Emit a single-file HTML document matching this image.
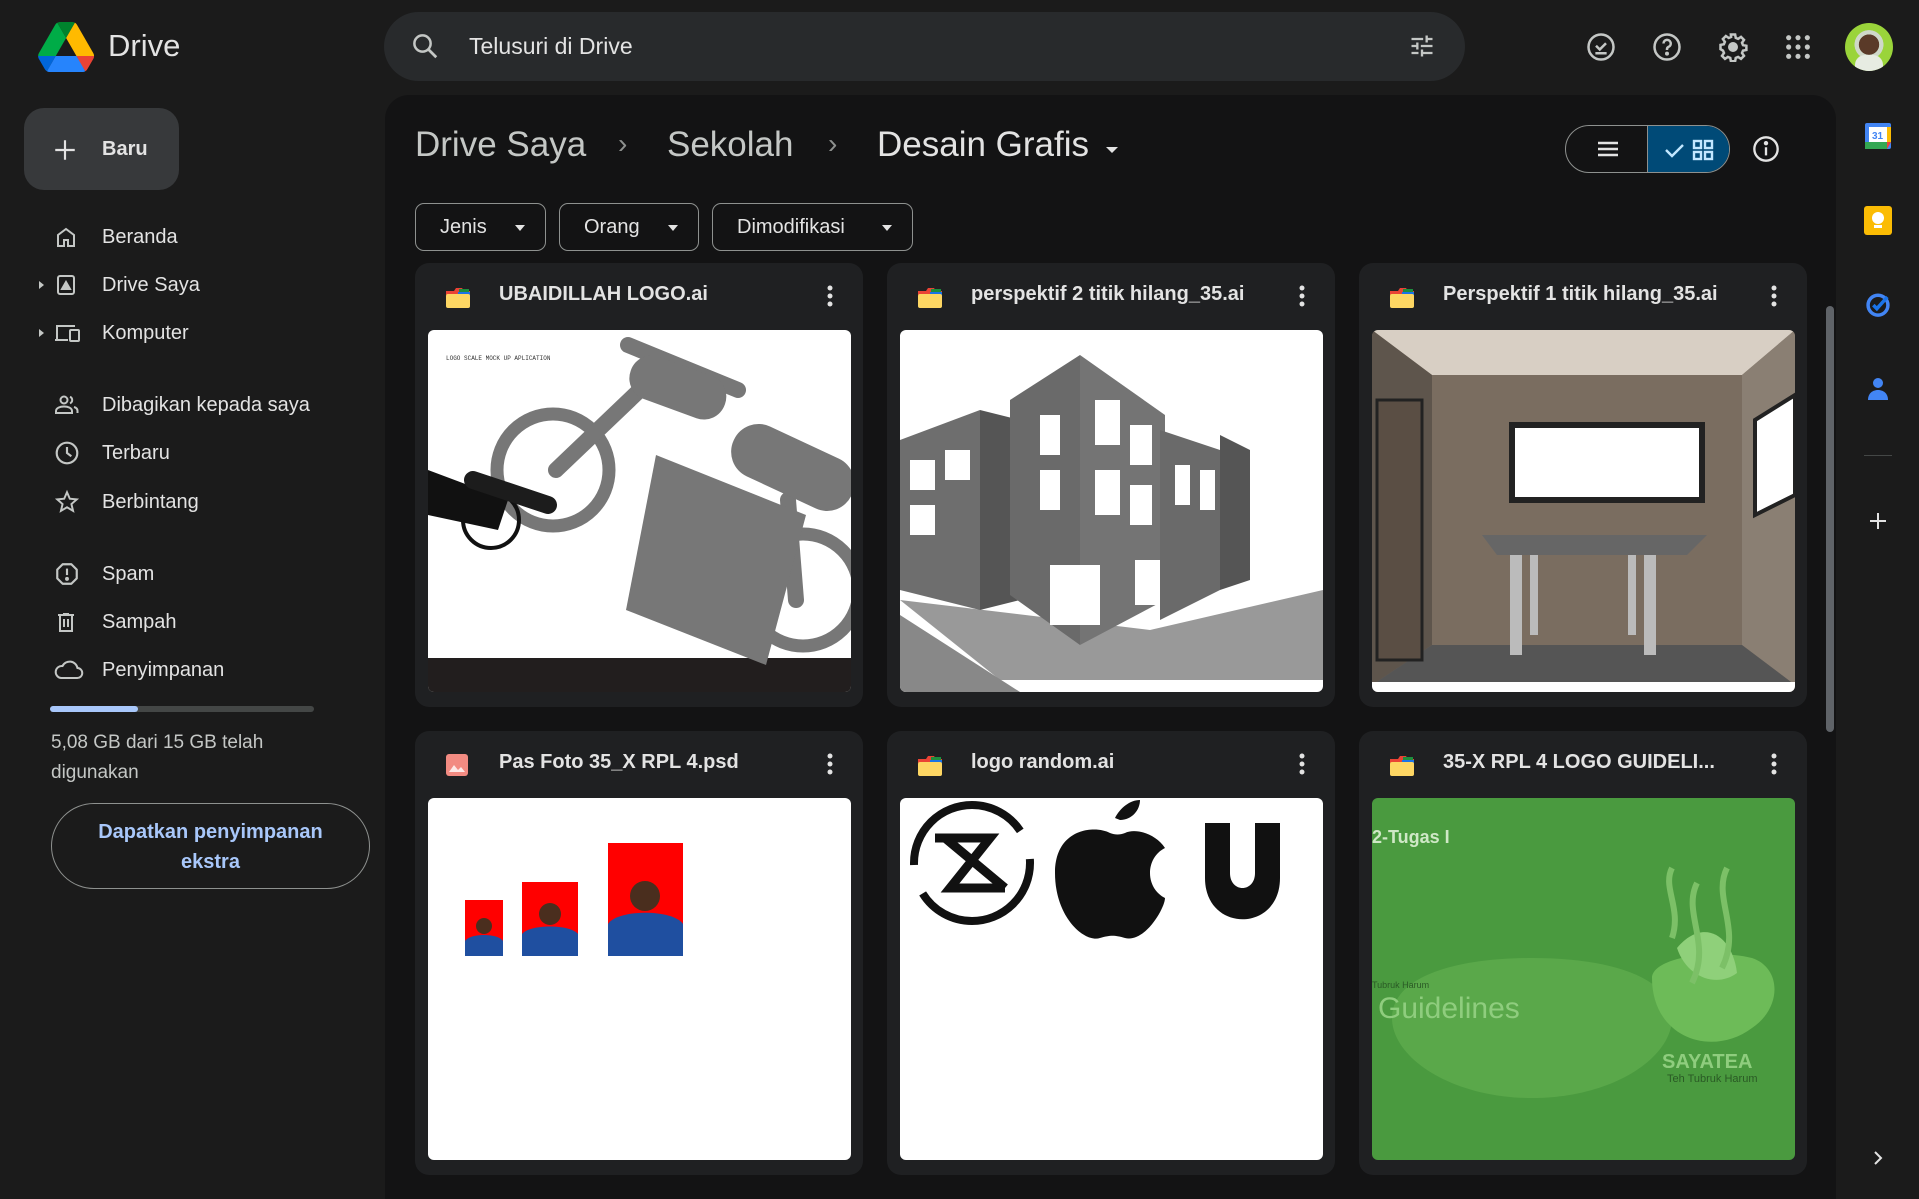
<!DOCTYPE html>
<html><head><meta charset="utf-8"><style>
*{box-sizing:border-box;margin:0;padding:0}
body{width:1919px;height:1199px;background:#1b1b1b;font-family:"Liberation Sans",sans-serif;color:#e3e3e3;position:relative;overflow:hidden}
.abs{position:absolute}
.nav{position:absolute;left:0;width:360px;height:40px;display:flex;align-items:center;font-size:20px;color:#e3e3e3}
.nav svg{position:absolute;left:54px}
.nav span{position:absolute;left:102px}
.chip{position:absolute;top:203px;height:48px;border:1px solid #8e918f;border-radius:9px;display:flex;align-items:center;font-size:20px;padding-left:24px;color:#e3e3e3}
.chip:after{content:"";position:absolute;right:20px;top:21px;border:5px solid transparent;border-top:6px solid #e3e3e3}
.card{position:absolute;width:448px;height:444px;background:#1f2022;border-radius:14px;overflow:hidden}
.card .t{position:absolute;left:84px;top:20px;font-size:20px;font-weight:bold;color:#e3e3e3;white-space:nowrap}
.card .ic{position:absolute;left:30px;top:22px}
.card .dots{position:absolute;right:30px;top:22px}
.card .th{position:absolute;left:13px;top:67px;width:423px;height:362px;background:#fff;border-radius:6px;overflow:hidden}
</style></head><body>

<svg class="abs" style="left:37px;top:22px" width="58" height="50" viewBox="0 0 87 78">
<path d="M6.6 66.85l3.85 6.65c.8 1.4 1.950 2.5 3.3 3.3L27.5 53H0c0 1.55.4 3.1 1.2 4.5z" fill="#0066da"/>
<path d="M43.65 25L29.9 1.2c-1.35.8-2.5 1.9-3.3 3.3L1.2 48.5A9 9 0 0 0 0 53h27.5z" fill="#00ac47"/>
<path d="M73.55 76.8c1.35-.8 2.5-1.9 3.3-3.3l1.6-2.75 7.65-13.250c.8-1.4 1.2-2.95 1.2-4.5H59.8l5.85 11.5z" fill="#ea4335"/>
<path d="M43.65 25L57.4 1.2C56.05.4 54.5 0 52.9 0H34.4c-1.6 0-3.15.45-4.5 1.2z" fill="#00832d"/>
<path d="M59.8 53H27.5L13.75 76.8c1.35.8 2.9 1.2 4.5 1.2h50.8c1.6 0 3.15-.45 4.5-1.2z" fill="#2684fc"/>
<path d="M73.4 26.5L60.7 4.5c-.8-1.4-1.95-2.5-3.3-3.3L43.65 25 59.8 53h27.45c0-1.55-.4-3.1-1.2-4.5z" fill="#ffba00"/>
</svg>
<div class="abs" style="left:108px;top:28px;font-size:31px;color:#e3e3e3">Drive</div>

<div class="abs" style="left:384px;top:12px;width:1081px;height:69px;background:#282a2c;border-radius:35px"></div>
<svg class="abs" style="left:410px;top:31px" width="30" height="30" viewBox="0 0 24 24"><circle cx="10" cy="10" r="6.5" fill="none" stroke="#c4c7c5" stroke-width="2"/><path d="M15 15l6 6" stroke="#c4c7c5" stroke-width="2.2"/></svg>
<div class="abs" style="left:469px;top:33px;font-size:23px;color:#e3e3e3">Telusuri di Drive</div>
<svg class="abs" style="left:1408px;top:32px" width="28" height="28" viewBox="0 0 24 24" fill="#c4c7c5"><path d="M3 17v2h6v-2H3zM3 5v2h10V5H3zm10 16v-2h8v-2h-8v-2h-2v6h2zM7 9v2H3v2h4v2h2V9H7zm14 4v-2H11v2h10zm-6-4h2V7h4V5h-4V3h-2v6z"/></svg>

<svg class="abs" style="left:1586px;top:32px" width="30" height="30" viewBox="0 0 24 24" fill="none" stroke="#c4c7c5" stroke-width="2"><circle cx="12" cy="12" r="10"/><path d="M8 11l3 3 5-5M7.5 17h9"/></svg>
<svg class="abs" style="left:1652px;top:32px" width="30" height="30" viewBox="0 0 24 24" fill="none" stroke="#c4c7c5" stroke-width="2"><circle cx="12" cy="12" r="10"/><path d="M9.2 9.2a2.9 2.9 0 1 1 4 2.7c-.8.4-1.2 1-1.2 1.9v.6"/><circle cx="12" cy="17.3" r=".6" fill="#c4c7c5"/></svg>
<svg class="abs" style="left:1718px;top:32px" width="30" height="30" viewBox="0 0 24 24" fill="none" stroke="#c4c7c5" stroke-width="2"><path d="M10.3 2h3.4l.5 2.7 1.9.8 2.3-1.6 2.4 2.4-1.6 2.3.8 1.9 2.7.5v3.4l-2.7.5-.8 1.9 1.6 2.3-2.4 2.4-2.3-1.6-1.9.8-.5 2.7h-3.4l-.5-2.7-1.9-.8-2.3 1.6-2.4-2.4 1.6-2.3-.8-1.9L2 13.7v-3.4l2.7-.5.8-1.9-1.6-2.3 2.4-2.4 2.3 1.6 1.9-.8z"/><circle cx="12" cy="12" r="3" fill="#c4c7c5"/></svg>
<svg class="abs" style="left:1784px;top:33px" width="28" height="28" viewBox="0 0 24 24" fill="#c4c7c5"><circle cx="4" cy="4" r="2.2"/><circle cx="12" cy="4" r="2.2"/><circle cx="20" cy="4" r="2.2"/><circle cx="4" cy="12" r="2.2"/><circle cx="12" cy="12" r="2.2"/><circle cx="20" cy="12" r="2.2"/><circle cx="4" cy="20" r="2.2"/><circle cx="12" cy="20" r="2.2"/><circle cx="20" cy="20" r="2.2"/></svg>
<div class="abs" style="left:1845px;top:23px;width:48px;height:48px;border-radius:50%;background:radial-gradient(circle at 50% 45%,#5a3a28 0 28%,#cfd8c9 29% 40%,#9ad43a 41%);overflow:hidden"><div style="position:absolute;left:10px;top:32px;width:28px;height:20px;background:#e7ece2;border-radius:10px 10px 0 0"></div></div>

<div class="abs" style="left:24px;top:108px;width:155px;height:82px;background:#37393b;border-radius:20px"></div>
<svg class="abs" style="left:52px;top:137px" width="26" height="26" viewBox="0 0 24 24"><path d="M12 3v18M3 12h18" stroke="#e3e3e3" stroke-width="2"/></svg>
<div class="abs" style="left:102px;top:138px;font-size:20px;font-weight:bold;color:#e3e3e3">Baru</div>

<div class="nav" style="top:217px"><svg width="24" height="24" viewBox="0 0 24 24" fill="none" stroke="#c4c7c5" stroke-width="2"><path d="M4 21V10l8-6 8 6v11h-6v-6h-4v6z"/></svg><span>Beranda</span></div>
<div class="nav" style="top:265px"><div style="position:absolute;left:39px;border:4px solid transparent;border-left:5px solid #c4c7c5"></div><svg width="24" height="24" viewBox="0 0 24 24" fill="none" stroke="#c4c7c5" stroke-width="2"><rect x="4" y="3" width="16" height="18" rx="2"/><path d="M8 16l4-7 4 7z" fill="#c4c7c5"/></svg><span>Drive Saya</span></div>
<div class="nav" style="top:313px"><div style="position:absolute;left:39px;border:4px solid transparent;border-left:5px solid #c4c7c5"></div><svg width="28" height="24" viewBox="0 0 28 24" fill="none" stroke="#c4c7c5" stroke-width="2"><path d="M3 18V5h18"/><path d="M1 19h13"/><rect x="16" y="9" width="9" height="11" rx="1"/></svg><span>Komputer</span></div>
<div class="nav" style="top:385px"><svg width="28" height="24" viewBox="0 0 28 24" fill="none" stroke="#c4c7c5" stroke-width="2"><circle cx="10" cy="7" r="3.5"/><path d="M2 20v-2c0-3 4-4.5 8-4.5s8 1.5 8 4.5v2z"/><path d="M16 3.8a3.5 3.5 0 0 1 0 6.5M20 14c2 .6 3.5 2 3.5 4v2"/></svg><span>Dibagikan kepada saya</span></div>
<div class="nav" style="top:433px"><svg width="26" height="26" viewBox="0 0 24 24" fill="none" stroke="#c4c7c5" stroke-width="2"><circle cx="12" cy="12" r="9.5"/><path d="M12 6.5V12l4 3"/></svg><span>Terbaru</span></div>
<div class="nav" style="top:482px"><svg width="26" height="26" viewBox="0 0 24 24" fill="none" stroke="#c4c7c5" stroke-width="1.8"><path d="M12 3l2.6 6 6.4.6-4.9 4.3 1.5 6.3L12 16.9l-5.6 3.3 1.5-6.3L3 9.6 9.4 9z"/></svg><span>Berbintang</span></div>
<div class="nav" style="top:554px"><svg width="26" height="26" viewBox="0 0 24 24" fill="none" stroke="#c4c7c5" stroke-width="2"><path d="M8 3h8l5 5v8l-5 5H8l-5-5V8z" stroke-linejoin="round"/><path d="M12 7v6"/><circle cx="12" cy="16.5" r=".8" fill="#c4c7c5"/></svg><span>Spam</span></div>
<div class="nav" style="top:602px"><svg width="24" height="26" viewBox="0 0 24 24" fill="none" stroke="#c4c7c5" stroke-width="2"><path d="M4 5h16M9 4h6M6 5v16h12V5M10 9v8M14 9v8"/></svg><span>Sampah</span></div>
<div class="nav" style="top:650px"><svg width="30" height="24" viewBox="0 0 30 24" fill="none" stroke="#c4c7c5" stroke-width="2"><path d="M7 20h16a5 5 0 0 0 .5-10A8 8 0 0 0 8.5 8 6 6 0 0 0 7 20z"/></svg><span>Penyimpanan</span></div>

<div class="abs" style="left:50px;top:706px;width:264px;height:6px;background:#444746;border-radius:3px"></div>
<div class="abs" style="left:50px;top:706px;width:88px;height:6px;background:#a8c7fa;border-radius:3px"></div>
<div class="abs" style="left:51px;top:728px;font-size:19px;line-height:30px;color:#c4c7c5">5,08 GB dari 15 GB telah<br>digunakan</div>
<div class="abs" style="left:51px;top:803px;width:319px;height:86px;border:1px solid #8e918f;border-radius:43px;text-align:center;font-size:20px;line-height:30px;padding-top:13px;color:#a8c7fa;font-weight:bold">Dapatkan penyimpanan<br>ekstra</div>

<div class="abs" style="left:385px;top:95px;width:1451px;height:1104px;background:#131314;border-radius:24px 24px 0 0"></div>
<div class="abs" style="left:415px;top:125px;font-size:35px;color:#c4c7c5;white-space:nowrap">Drive Saya</div>
<div class="abs" style="left:618px;top:128px;font-size:28px;color:#8e918f">›</div>
<div class="abs" style="left:667px;top:125px;font-size:35px;color:#c4c7c5">Sekolah</div>
<div class="abs" style="left:828px;top:128px;font-size:28px;color:#8e918f">›</div>
<div class="abs" style="left:877px;top:125px;font-size:35px;color:#e3e3e3;white-space:nowrap">Desain Grafis</div>
<div class="abs" style="left:1106px;top:147px;border:6px solid transparent;border-top:6px solid #e3e3e3"></div>

<div class="abs" style="left:1565px;top:125px;width:165px;height:48px;border:1px solid #8e918f;border-radius:24px;overflow:hidden">
<div style="position:absolute;left:81px;top:0;width:84px;height:48px;background:#004a77;border-left:1px solid #8e918f"></div>
<svg style="position:absolute;left:30px;top:13px" width="24" height="20" viewBox="0 0 24 20"><path d="M2 4h20M2 10h20M2 16h20" stroke="#e3e3e3" stroke-width="2.4"/></svg>
<svg style="position:absolute;left:98px;top:12px" width="60" height="24" viewBox="0 0 60 24" fill="none" stroke="#c2e7ff" stroke-width="2.4"><path d="M2 12l6 6 11-11"/><rect x="30" y="3" width="7" height="7"/><rect x="41" y="3" width="7" height="7"/><rect x="30" y="14" width="7" height="7"/><rect x="41" y="14" width="7" height="7"/></svg>
</div>
<svg class="abs" style="left:1752px;top:135px" width="28" height="28" viewBox="0 0 24 24" fill="none" stroke="#e3e3e3" stroke-width="2"><circle cx="12" cy="12" r="10"/><path d="M12 10.5v7"/><circle cx="12" cy="7" r=".9" fill="#e3e3e3"/></svg>

<div class="chip" style="left:415px;width:131px">Jenis</div>
<div class="chip" style="left:559px;width:140px">Orang</div>
<div class="chip" style="left:712px;width:201px">Dimodifikasi</div>

<div class="abs" style="left:1826px;top:306px;width:8px;height:426px;background:#5f6368;border-radius:4px"></div>

<div class="card" style="left:415px;top:263px">
<svg class="ic" width="26" height="24" viewBox="0 0 26 24"><path d="M1 6h8l2-3h6l2 3h6v4H1z" fill="#ea4335"/><path d="M14 4h10v6H14z" fill="#1e8e3e"/><path d="M13 7h12v5H13z" fill="#1a73e8"/><rect x="1" y="9" width="24" height="14" rx="2" fill="#fdd663"/></svg>
<div class="t">UBAIDILLAH LOGO.ai</div>
<svg class="dots" width="6" height="22" viewBox="0 0 6 22" fill="#e3e3e3"><circle cx="3" cy="3" r="2.5"/><circle cx="3" cy="11" r="2.5"/><circle cx="3" cy="19" r="2.5"/></svg>
<div class="th"><svg width="423" height="362" viewBox="0 0 423 362">
<rect y="328" width="423" height="34" fill="#221e1e"/>
<text x="18" y="30" font-size="6" font-family="Liberation Mono" fill="#333">LOGO SCALE      MOCK UP APLICATION</text>
<g fill="none" stroke="#777" stroke-width="13"><circle cx="125" cy="140" r="56"/><circle cx="375" cy="260" r="56"/></g>
<g stroke="#777" stroke-width="16" stroke-linecap="round" fill="none"><path d="M128 140l110-105M200 15l110 45M360 170l8 100"/></g>
<rect x="200" y="35" width="100" height="45" rx="22" fill="#777" transform="rotate(20 250 57)"/>
<rect x="300" y="110" width="130" height="55" rx="27" fill="#777" transform="rotate(25 365 137)"/>
<path d="M228 125l150 60-40 150-140-55z" fill="#777"/>
<circle cx="63" cy="190" r="28" fill="none" stroke="#111" stroke-width="4"/>
<path d="M0 140l80 30-10 30L0 185z" fill="#111"/><path d="M45 150l75 25" stroke="#1c1c1c" stroke-width="18" stroke-linecap="round"/>
</svg></div></div>

<div class="card" style="left:887px;top:263px">
<svg class="ic" width="26" height="24" viewBox="0 0 26 24"><path d="M1 6h8l2-3h6l2 3h6v4H1z" fill="#ea4335"/><path d="M14 4h10v6H14z" fill="#1e8e3e"/><path d="M13 7h12v5H13z" fill="#1a73e8"/><rect x="1" y="9" width="24" height="14" rx="2" fill="#fdd663"/></svg>
<div class="t">perspektif 2 titik hilang_35.ai</div>
<svg class="dots" width="6" height="22" viewBox="0 0 6 22" fill="#e3e3e3"><circle cx="3" cy="3" r="2.5"/><circle cx="3" cy="11" r="2.5"/><circle cx="3" cy="19" r="2.5"/></svg>
<div class="th"><svg width="423" height="362" viewBox="0 0 423 362">
<path d="M0 270l100 80h323V260L250 300z" fill="#999"/>
<path d="M0 285l120 77H0z" fill="#888"/>
<path d="M0 110l80-30v200L0 260z" fill="#6e6e6e"/><path d="M80 80l40 10v180l-40 10z" fill="#555"/>
<path d="M110 70l70-45v290l-70-50z" fill="#6a6a6a"/><path d="M180 25l85 60v185l-85 45z" fill="#747474"/>
<path d="M260 100l60 20v140l-60 30z" fill="#6a6a6a"/><path d="M320 105l30 15v130l-30 10z" fill="#555"/>
<g fill="#fff"><rect x="140" y="85" width="20" height="40"/><rect x="140" y="140" width="20" height="40"/><rect x="195" y="70" width="25" height="45"/><rect x="230" y="95" width="22" height="40"/><rect x="195" y="140" width="25" height="45"/><rect x="230" y="155" width="22" height="40"/><rect x="10" y="130" width="25" height="30"/><rect x="45" y="120" width="25" height="30"/><rect x="10" y="175" width="25" height="30"/><rect x="275" y="135" width="15" height="40"/><rect x="300" y="140" width="15" height="40"/><rect x="150" y="235" width="50" height="60"/><rect x="235" y="230" width="25" height="45"/></g>
</svg></div></div>

<div class="card" style="left:1359px;top:263px">
<svg class="ic" width="26" height="24" viewBox="0 0 26 24"><path d="M1 6h8l2-3h6l2 3h6v4H1z" fill="#ea4335"/><path d="M14 4h10v6H14z" fill="#1e8e3e"/><path d="M13 7h12v5H13z" fill="#1a73e8"/><rect x="1" y="9" width="24" height="14" rx="2" fill="#fdd663"/></svg>
<div class="t">Perspektif 1 titik hilang_35.ai</div>
<svg class="dots" width="6" height="22" viewBox="0 0 6 22" fill="#e3e3e3"><circle cx="3" cy="3" r="2.5"/><circle cx="3" cy="11" r="2.5"/><circle cx="3" cy="19" r="2.5"/></svg>
<div class="th" style="background:#7a6d60"><svg width="423" height="362" viewBox="0 0 423 362">
<path d="M0 0h423L370 45H60z" fill="#d8cfc4"/>
<path d="M0 0l60 45v270L0 355z" fill="#5e554c"/><path d="M423 0l-53 45v270l53 40z" fill="#8a7f73"/>
<path d="M0 355l60-40h310l53 40z" fill="#555"/><rect y="352" width="423" height="10" fill="#fff"/>
<rect x="5" y="70" width="45" height="260" fill="#5a4e44" stroke="#222" stroke-width="3"/>
<rect x="140" y="95" width="190" height="75" fill="#fff" stroke="#222" stroke-width="6"/>
<path d="M383 90l40-25v100l-40 20z" fill="#fff" stroke="#222" stroke-width="4"/>
<path d="M110 205h225l-20 20H125z" fill="#666"/>
<g fill="#bbb"><rect x="138" y="225" width="12" height="100"/><rect x="272" y="225" width="12" height="100"/><rect x="158" y="225" width="8" height="80"/><rect x="256" y="225" width="8" height="80"/></g>
</svg></div></div>

<div class="card" style="left:415px;top:731px">
<svg class="ic" width="24" height="24" viewBox="0 0 24 24"><rect x="1" y="1" width="22" height="22" rx="3" fill="#f28b82"/><path d="M4 19l5-7 4 5 3-3 4 5z" fill="#fff" opacity=".8"/></svg>
<div class="t">Pas Foto 35_X RPL 4.psd</div>
<svg class="dots" width="6" height="22" viewBox="0 0 6 22" fill="#e3e3e3"><circle cx="3" cy="3" r="2.5"/><circle cx="3" cy="11" r="2.5"/><circle cx="3" cy="19" r="2.5"/></svg>
<div class="th"><svg width="423" height="362" viewBox="0 0 423 362">
<rect x="37" y="102" width="38" height="56" fill="#f00"/><rect x="94" y="84" width="56" height="74" fill="#f00"/><rect x="180" y="45" width="75" height="113" fill="#f00"/>
<g fill="#1f4fa0"><path d="M37 158v-15c5-8 33-8 38 0v15z"/><path d="M94 158v-22c8-10 48-10 56 0v22z"/><path d="M180 158v-32c10-15 65-15 75 0v32z"/></g>
<g fill="#4a2e1e"><circle cx="56" cy="128" r="8"/><circle cx="122" cy="116" r="11"/><circle cx="217" cy="98" r="15"/></g>
</svg></div></div>

<div class="card" style="left:887px;top:731px">
<svg class="ic" width="26" height="24" viewBox="0 0 26 24"><path d="M1 6h8l2-3h6l2 3h6v4H1z" fill="#ea4335"/><path d="M14 4h10v6H14z" fill="#1e8e3e"/><path d="M13 7h12v5H13z" fill="#1a73e8"/><rect x="1" y="9" width="24" height="14" rx="2" fill="#fdd663"/></svg>
<div class="t">logo random.ai</div>
<svg class="dots" width="6" height="22" viewBox="0 0 6 22" fill="#e3e3e3"><circle cx="3" cy="3" r="2.5"/><circle cx="3" cy="11" r="2.5"/><circle cx="3" cy="19" r="2.5"/></svg>
<div class="th"><svg width="423" height="362" viewBox="0 0 423 362">
<circle cx="72" cy="65" r="58" fill="none" stroke="#111" stroke-width="8" stroke-dasharray="150 30"/>
<path d="M35 40h55L50 90h55M45 40l60 50" stroke="#111" stroke-width="9" fill="none"/>
<path d="M215 20c5-10 15-18 25-18 0 10-8 20-20 20zM210 35c-15-8-55-5-55 40s30 70 45 65c10-3 15-3 25 0 20 5 40-30 40-40-20-10-20-40 0-50-10-15-30-20-40-15-5 2-10 2-15 0z" fill="#111"/>
<path d="M305 25h25v50c0 20 25 20 25 0V25h25v55c0 55-75 55-75 0z" fill="#111"/>
</svg></div></div>

<div class="card" style="left:1359px;top:731px">
<svg class="ic" width="26" height="24" viewBox="0 0 26 24"><path d="M1 6h8l2-3h6l2 3h6v4H1z" fill="#ea4335"/><path d="M14 4h10v6H14z" fill="#1e8e3e"/><path d="M13 7h12v5H13z" fill="#1a73e8"/><rect x="1" y="9" width="24" height="14" rx="2" fill="#fdd663"/></svg>
<div class="t">35-X RPL 4 LOGO GUIDELI...</div>
<svg class="dots" width="6" height="22" viewBox="0 0 6 22" fill="#e3e3e3"><circle cx="3" cy="3" r="2.5"/><circle cx="3" cy="11" r="2.5"/><circle cx="3" cy="19" r="2.5"/></svg>
<div class="th" style="background:#4a9a3f"><svg width="423" height="362" viewBox="0 0 423 362">
<path d="M20 220c0-40 60-60 140-60s140 20 140 60-60 80-140 80S20 260 20 220z" fill="#5aa84a"/>
<path d="M280 180c0-20 60-30 100-20 30 10 30 50 0 70-40 30-100 10-100-50z" fill="#6dbb58"/>
<path d="M305 150c10 30 40 40 60 25-5-40-35-55-60-25z" fill="#8fd07a"/>
<path d="M320 185c20-40-10-70 5-100M350 170c20-40-10-70 5-100M300 140c10-30-10-50 0-70" stroke="#7cc067" stroke-width="6" fill="none"/>
<text x="0" y="45" font-size="18" font-weight="bold" fill="#cfe8c6" font-family="Liberation Sans">2-Tugas I</text>
<text x="0" y="190" font-size="9" fill="#2a5a25" font-family="Liberation Sans">Tubruk Harum</text>
<text x="6" y="220" font-size="30" fill="#8fcd7e" font-family="Liberation Sans">Guidelines</text>
<text x="290" y="270" font-size="20" font-weight="bold" fill="#8fcd7e" font-family="Liberation Sans">SAYATEA</text>
<text x="295" y="284" font-size="11" fill="#2a5a25" font-family="Liberation Sans">Teh Tubruk Harum</text>
</svg></div></div>

<svg class="abs" style="left:1864px;top:122px" width="28" height="28" viewBox="0 0 28 28"><rect x="1" y="1" width="26" height="26" rx="2" fill="#4285f4"/><rect x="5" y="5" width="18" height="15" fill="#fff"/><rect x="1" y="20" width="22" height="7" fill="#34a853"/><rect x="23" y="5" width="4" height="15" fill="#fbbc04"/><path d="M23 20h4l-4 7z" fill="#ea4335"/><text x="8" y="17" font-size="10" fill="#4285f4" font-family="Liberation Sans" font-weight="bold">31</text></svg>
<div class="abs" style="left:1864px;top:206px;width:28px;height:29px;background:#fbbc04;border-radius:3px"><div style="position:absolute;left:8px;top:6px;width:12px;height:12px;border-radius:50%;background:#fff"></div><div style="position:absolute;left:10px;top:19px;width:8px;height:3px;background:#fff"></div></div>
<svg class="abs" style="left:1864px;top:290px" width="28" height="28" viewBox="0 0 24 24" fill="none" stroke="#4285f4" stroke-width="3"><circle cx="12" cy="13" r="8.5"/><path d="M8 13l3 3 9-10" stroke="#1a73e8"/></svg>
<svg class="abs" style="left:1866px;top:376px" width="24" height="26" viewBox="0 0 24 26" fill="#4285f4"><circle cx="12" cy="7" r="5"/><path d="M2 24c0-7 5-10 10-10s10 3 10 10z"/></svg>
<div class="abs" style="left:1864px;top:455px;width:28px;height:1px;background:#444746"></div>
<svg class="abs" style="left:1868px;top:511px" width="20" height="20" viewBox="0 0 20 20"><path d="M10 2v16M2 10h16" stroke="#e3e3e3" stroke-width="2"/></svg>
<svg class="abs" style="left:1870px;top:1150px" width="16" height="16" viewBox="0 0 16 16"><path d="M5 2l6 6-6 6" stroke="#e3e3e3" stroke-width="2" fill="none"/></svg>
</body></html>
